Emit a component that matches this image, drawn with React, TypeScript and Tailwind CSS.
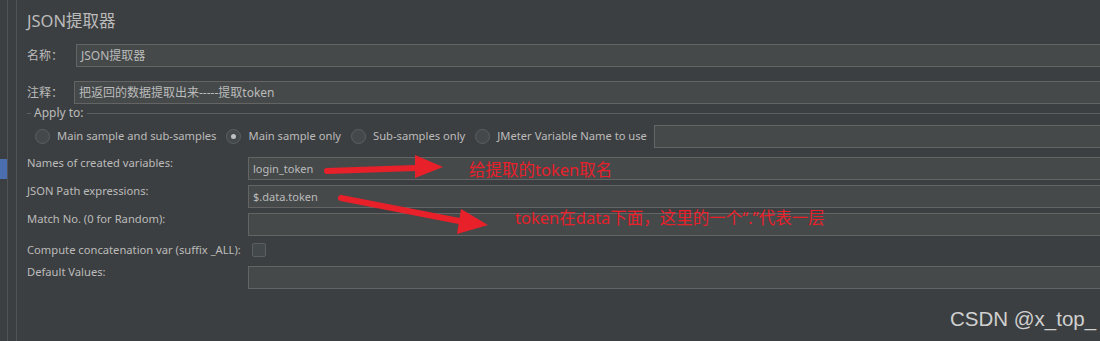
import React from "react";

const font = { fontFamily: '"Noto Sans", "Noto Sans CJK SC", sans-serif' };

const TextField = ({ value, className }: { value?: string; className?: string }) => {
  return (
    <div
      className={
        "h-[23px] w-[1200px] shrink-0 border border-[#646464] bg-[#45494a] pl-[4px] leading-[21px] text-[#bbbbbb] " +
        (className ?? "")
      }
    >
      {value}
    </div>
  );
};

const Radio = ({ label, checked = false }: { label: string; checked?: boolean }) => {
  return (
    <div className="flex items-center gap-[7px]">
      <div className="flex h-[15px] w-[15px] items-center justify-center rounded-full border border-[#5c5f61] bg-[#43494a]">
        {checked && <div className="h-[5px] w-[5px] rounded-full bg-[#c0c0c0]" />}
      </div>
      <span className="whitespace-nowrap">{label}</span>
    </div>
  );
};

const FieldRow = ({ label, value, className }: { label: string; value?: string; className?: string }) => {
  return (
    <div className={"flex h-[23px] " + (className ?? "")}>
      <div className="w-[221px] shrink-0 whitespace-nowrap leading-[12px]">{label}</div>
      <TextField className="text-[11px]" value={value} />
    </div>
  );
};

export default function App() {
  return (
    <div
      className="relative flex h-[341px] w-[1100px] overflow-hidden bg-[#3c3f41] text-[11.2px] text-[#bbbbbb]"
      style={font}
    >
      {/* left tree strip */}
      <div className="w-[8px] shrink-0 border-r border-[#515456] pt-[159px]">
        <div className="h-[20px] w-[7px] bg-[#4b6eaf]" />
      </div>
      <div className="w-[9px] shrink-0 border-r border-[#515456]" />

      {/* main panel */}
      <div className="flex min-w-0 flex-1 flex-col overflow-hidden pl-[10px]">
        <div className="mt-[11px] h-[20px] text-[16.5px] leading-[20px]">JSON提取器</div>

        <div className="mt-[13px] flex h-[23px] items-center text-[12px]">
          <div className="w-[49px] shrink-0">名称：</div>
          <TextField value="JSON提取器" />
        </div>

        <div className="mt-[14px] flex h-[23px] items-center text-[12px]">
          <div className="w-[47px] shrink-0">注释：</div>
          <TextField value="把返回的数据提取出来-----提取token" />
        </div>

        <div className="mt-[1px] flex h-[16px] items-center">
          <div className="h-px w-[4px] bg-[#5c5f61]" />
          <div className="px-[3px] text-[12px] leading-[14px]">Apply to:</div>
          <div className="h-px flex-1 bg-[#5c5f61]" />
        </div>

        <div className="mt-[4px] flex h-[23px] items-center pl-[8px]">
          <div className="flex items-center gap-[10px]">
            <Radio label="Main sample and sub-samples" />
            <Radio label="Main sample only" checked />
            <Radio label="Sub-samples only" />
            <Radio label="JMeter Variable Name to use" />
          </div>
          <TextField className="ml-[7px]" />
        </div>

        <FieldRow className="mt-[9px]" label="Names of created variables:" value="login_token" />
        <FieldRow className="mt-[5px]" label="JSON Path expressions:" value="$.data.token" />
        <FieldRow className="mt-[5px]" label="Match No. (0 for Random):" />

        <div className="mt-[7px] flex h-[14px] items-center">
          <div className="w-[225px] shrink-0 whitespace-nowrap">Compute concatenation var (suffix _ALL):</div>
          <div className="h-[14px] w-[14px] rounded-[2px] border border-[#5c5f61] bg-[#43494a]" />
        </div>

        <FieldRow className="mt-[9px]" label="Default Values:" />
      </div>

      {/* red annotations drawn over the screenshot */}
      <svg className="absolute left-0 top-0" width="1100" height="341" viewBox="0 0 1100 341">
        <path d="M327 171 L416 168" stroke="#e8202a" strokeWidth="6" strokeLinecap="round" fill="none" />
        <path d="M415 155 L443 167 L415 178 Z" fill="#e8202a" />
        <path d="M341 198 L459 221" stroke="#e8202a" strokeWidth="6" strokeLinecap="round" fill="none" />
        <path d="M461 209 L488 225 L457 234 Z" fill="#e8202a" />
      </svg>
      <div className="absolute left-[469px] top-[159px] text-[16.5px] leading-[22px] text-[#e8202a]">
        给提取的token取名
      </div>
      <div className="absolute left-[515px] top-[207px] text-[16.5px] leading-[22px] text-[#e8202a]">
        token在data下面，这里的一个“.”代表一层
      </div>

      <div
        className="absolute left-[950px] top-[307px] text-[20.5px] leading-[24px] text-[#d0d0d0]"
        style={{ fontFamily: '"Liberation Sans", sans-serif' }}
      >
        CSDN @x_top_
      </div>
    </div>
  );
}
